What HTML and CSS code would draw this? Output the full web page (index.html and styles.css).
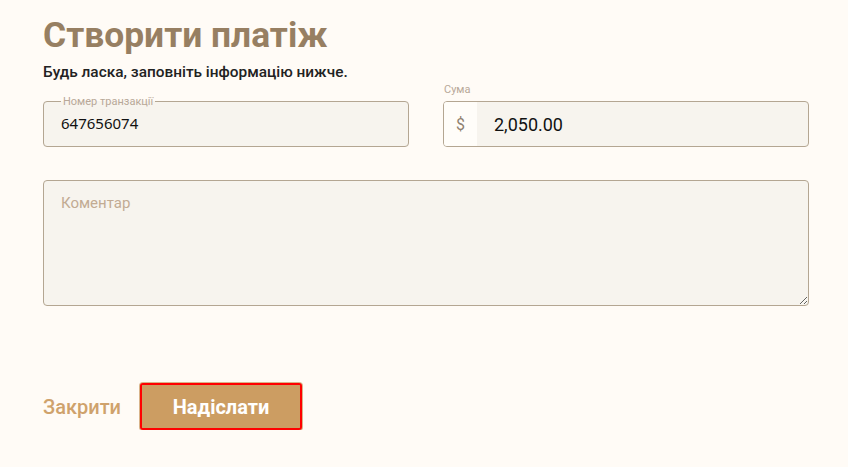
FILE: index.html
```html
<!DOCTYPE html>
<html lang="uk">
<head>
<meta charset="utf-8">
<link rel="stylesheet" href="styles.css">
</head>
<body>
<main class="page">
  <h1 class="title">Створити платіж</h1>
  <p class="subtitle">Будь ласка, заповніть інформацію нижче.</p>
  <div class="row">
    <fieldset class="field">
      <legend class="legend">Номер транзакції</legend>
      <div class="field-value">647656074</div>
    </fieldset>
    <div class="amount">
      <div class="amount-label">Сума</div>
      <div class="amount-box">
        <span class="prefix">$</span>
        <span class="amount-value">2,050.00</span>
      </div>
    </div>
  </div>
  <textarea class="comment" placeholder="Коментар"></textarea>
  <div class="actions">
    <button class="close">Закрити</button>
    <button class="submit">Надіслати</button>
  </div>
</main>
</body>
</html>
```
FILE: styles.css
```css
html, body {
  margin: 0;
  padding: 0;
  background: #fffbf6;
  font-family: Roboto, "Liberation Sans", sans-serif;
}
.page {
  padding: 15px 39px 0 43px;
  display: flex;
  flex-direction: column;
}
.title {
  margin: 0;
  font-size: 35.4px;
  font-weight: 700;
  line-height: 40px;
  color: #977f62;
}
.subtitle {
  margin: 8px 0 0;
  font-size: 15.4px;
  font-weight: 500;
  line-height: 18px;
  color: #222;
}
.row {
  display: grid;
  grid-template-columns: 1fr 1fr;
  gap: 34px;
  margin-top: 3px;
}
.field {
  margin: 12px 0 0;
  padding: 3px 17px 0;
  height: 51px;
  box-sizing: border-box;
  border: 1px solid #b4a692;
  border-radius: 4px;
  background: #f7f4ee;
  min-width: 0;
}
.legend {
  padding: 0 2px;
  margin-left: 0;
  font-size: 11px;
  line-height: 11px;
  color: #b8a898;
}
.field-value {
  font-family: "Noto Sans", sans-serif;
  font-size: 15px;
  line-height: 18px;
  color: #111;
  margin-top: 4px;
}
.amount {
  display: flex;
  flex-direction: column;
}
.amount-label {
  font-size: 11px;
  line-height: 12px;
  color: #b8a898;
  padding-left: 1px;
}
.amount-box {
  margin-top: 5px;
  height: 46px;
  box-sizing: border-box;
  border: 1px solid #b4a692;
  border-radius: 4px;
  background: #f7f4ee;
  display: flex;
  overflow: hidden;
}
.prefix {
  width: 33px;
  background: #fffdf9;
  color: #8f8170;
  font-size: 16px;
  display: flex;
  align-items: center;
  justify-content: center;
}
.amount-value {
  display: flex;
  align-items: center;
  padding-left: 17px;
  font-size: 18px;
  color: #111;
}
.comment {
  margin-top: 33px;
  height: 126px;
  box-sizing: border-box;
  border: 1px solid #b4a692;
  border-radius: 4px;
  background: #f7f4ee;
  padding: 13px 17px;
  font-family: Roboto, "Liberation Sans", sans-serif;
  font-size: 15px;
  resize: vertical;
}
.comment::placeholder {
  color: #c2ab93;
}
.actions {
  margin-top: 77px;
  display: flex;
  align-items: center;
  gap: 19px;
}
.close {
  border: none;
  background: none;
  padding: 0;
  font-family: Roboto, "Liberation Sans", sans-serif;
  font-size: 20px;
  font-weight: 500;
  color: #cfa26c;
}
.submit {
  width: 162px;
  height: 47px;
  border: 2px solid #ff0000;
  outline: 2px solid #cc9d62;
  outline-offset: -4px;
  box-shadow: 0 0 0 1px #d8b48a;
  border-radius: 3px;
  background: #cc9d62;
  color: #fff;
  font-family: Roboto, "Liberation Sans", sans-serif;
  font-size: 20px;
  font-weight: 700;
}
```
